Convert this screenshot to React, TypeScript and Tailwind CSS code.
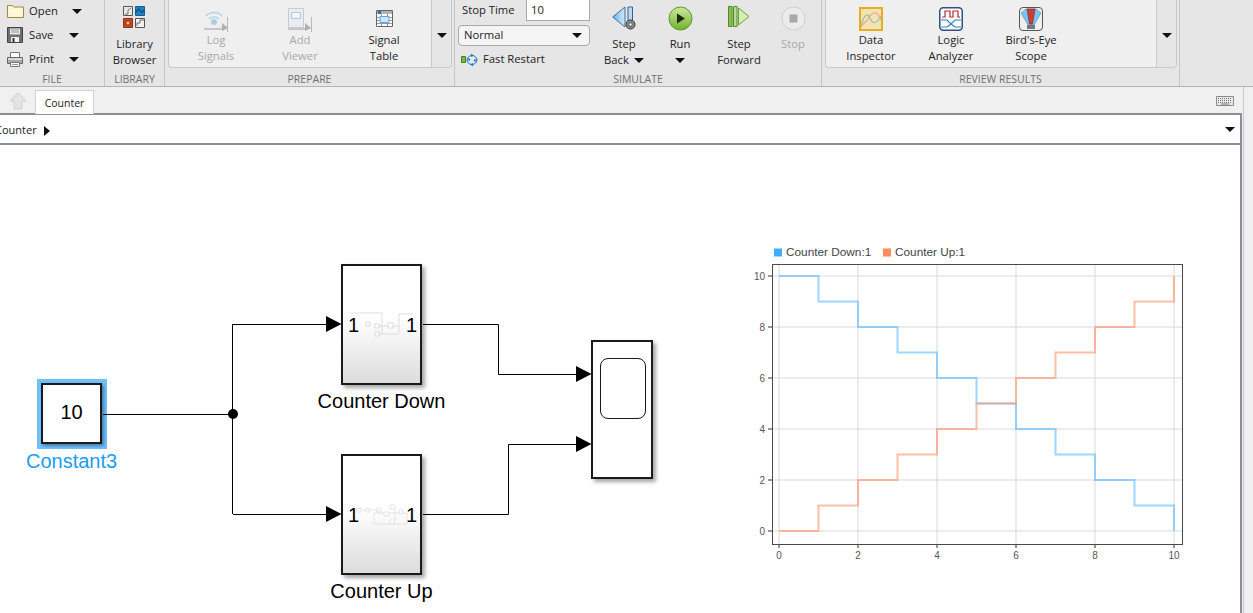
import React from "react";

const Caret = ({ className = "" }: { className?: string }) => (
  <svg width="10" height="5" viewBox="0 0 10 5" className={className}>
    <path d="M0 0H10L5 5Z" fill="#111" />
  </svg>
);

const FolderIcon = () => (
  <svg width="17" height="14" viewBox="0 0 17 14">
    <path d="M.5 1.5h5l1.5 1.500h9.500v10.500H.5Z" fill="#fdf3c4" stroke="#a08a4e" />
    <path d="M1.500 4.500h14v8h-14Z" fill="#fff8d8" />
  </svg>
);

const SaveIcon = () => (
  <svg width="16" height="16" viewBox="0 0 16 16">
    <path d="M.5.5h15v15H.5Z" fill="#6d6f73" stroke="#444" />
    <path d="M3 1.500h10v6H3Z" fill="#e6e6e6" />
    <path d="M4 3h8M4 5h8" stroke="#999" />
    <path d="M4 10h8v5H4Z" fill="#f2f2f2" />
    <path d="M5.500 11h2v4h-2Z" fill="#333" />
  </svg>
);

const PrintIcon = () => (
  <svg width="16" height="15" viewBox="0 0 16 15">
    <path d="M3.500.5h9v5h-9Z" fill="#fff" stroke="#777" />
    <path d="M.5 5.500h15v6H.5Z" fill="#a9adb3" stroke="#666" />
    <path d="M1 6h14v2H1Z" fill="#d4d7db" />
    <path d="M3.500 10.500h9v4h-9Z" fill="#fff" stroke="#777" />
    <path d="M5 12.500h6" stroke="#7aa3c7" />
  </svg>
);

const LibraryIcon = () => (
  <svg width="23" height="23" viewBox="0 0 23 23">
    <path d="M.5.5h9v9h-9Z" fill="#e9e9e9" stroke="#555" />
    <path d="M2 8 5 8 5 4 8 2" fill="none" stroke="#777" />
    <path d="M12.500.5h9v9h-9Z" fill="#1c82c4" stroke="#145f92" />
    <path d="M13.500 6c2-5 3-3 4-1s2 2 3-1" fill="none" stroke="#0b2a44" />
    <path d="M.5 12.500h9v9h-9Z" fill="#d9481c" stroke="#8f2f12" />
    <path d="M3 15h4v4H3Z" fill="#f8c090" stroke="#7a2408" />
    <path d="M12.500 12.500h9v9h-9Z" fill="#f1f1f1" stroke="#555" />
    <path d="M14 20v-3h3v-3h4" fill="none" stroke="#666" />
  </svg>
);

const LogSignalsIcon = () => (
  <svg width="25" height="24" viewBox="0 0 25 24" className="mt-[1px]">
    <path d="M2 8a11 11 0 0 1 16 0M5 11a7 7 0 0 1 10 0" fill="none" stroke="#b5d5ea" strokeWidth="1.500" />
    <circle cx="10" cy="14" r="3" fill="#a9cde6" />
    <path d="M0 21h19" stroke="#b8b8b8" strokeWidth="1.500" />
    <path d="M18 15l6 5-6 3Z" fill="#b0b0b0" />
    <path d="M23.500 9v15" stroke="#b8b8b8" />
  </svg>
);

const AddViewerIcon = () => (
  <svg width="24" height="24" viewBox="0 0 24 24" className="mt-[1px]">
    <path d="M.5.5h15v19H.5Z" fill="#e8eef3" stroke="#c6ccd2" />
    <path d="M3.500 4.500h9v6h-9Z" fill="#f3f6f8" stroke="#b9c6d2" />
    <path d="M0 21h19" stroke="#b8b8b8" strokeWidth="1.500" />
    <path d="M17 15l6 5-6 3Z" fill="#b0b0b0" />
    <path d="M23.500 9v15" stroke="#b8b8b8" />
  </svg>
);

const SignalTableIcon = () => (
  <svg width="17" height="17" viewBox="0 0 17 17" className="mt-[3px]">
    <path d="M.5.5h16v16H.5Z" fill="#fff" stroke="#666" />
    <path d="M1 1h15v3H1Z" fill="#aeb2b6" />
    <path d="M2 1h3v3H2Z" fill="#1c6fb8" />
    <path d="M1 7.500h15M1 10.500h15M1 13.500h15M5.500 4v12M11.500 4v12" stroke="#9a9a9a" />
    <path d="M4 6.500h9v6H4Z" fill="#cfe6fb" stroke="#5aa4e6" />
  </svg>
);

const FastRestartIcon = () => (
  <svg width="17" height="14" viewBox="0 0 17 14">
    <path d="M.5 3.500h4v6h-4Z" fill="#79b83d" stroke="#4e7f22" />
    <ellipse cx="11" cy="7" rx="5" ry="4.500" fill="#d9ecf8" stroke="#2a78b8" />
    <path d="M6 7h3l-1.500-2M16 7h-3l1.500 2" fill="none" stroke="#1c5f99" />
    <path d="M10 .5l3 2-3 1.500ZM12 13.500l-3-2 3-1.500Z" fill="#2a78b8" />
  </svg>
);

const StepBackIcon = () => (
  <svg width="24" height="24" viewBox="0 0 24 24">
    <defs>
      <linearGradient id="sb" x1="0" x2="1" y1="0" y2="0">
        <stop offset="0" stopColor="#6fb3e4" />
        <stop offset="1" stopColor="#d4e9f8" />
      </linearGradient>
    </defs>
    <path d="M.7 11 13 1v20Z" fill="url(#sb)" stroke="#3d6f99" />
    <path d="M16 1h4.500v15H16Z" fill="#b9daf2" stroke="#38648a" />
    <circle cx="18.500" cy="18.500" r="4.500" fill="#8d8d8d" stroke="#333" />
    <circle cx="18.500" cy="18.500" r="1.800" fill="#eee" stroke="#333" strokeWidth=".7" />
  </svg>
);

const RunIcon = () => (
  <svg width="25" height="25" viewBox="0 0 25 25">
    <defs>
      <linearGradient id="run" x1="0" x2="0" y1="0" y2="1">
        <stop offset="0" stopColor="#cfe89c" />
        <stop offset="1" stopColor="#6eb32e" />
      </linearGradient>
    </defs>
    <circle cx="12.500" cy="12.500" r="11.500" fill="url(#run)" stroke="#5d9a2b" />
    <path d="M9 7.500l8 5-8 5Z" fill="#1f2a12" />
  </svg>
);

const StepForwardIcon = () => (
  <svg width="22" height="22" viewBox="0 0 22 22">
    <path d="M.5.5h3.500v20H.5Z" fill="#8cc152" stroke="#4e8a25" />
    <path d="M5.500.5H9v20H5.500Z" fill="#b9dd8c" stroke="#4e8a25" />
    <path d="M10.500 2 21 10.500 10.500 19Z" fill="#d6ecb8" stroke="#6ba33a" />
  </svg>
);

const StopIcon = () => (
  <svg width="25" height="25" viewBox="0 0 25 25">
    <circle cx="12.500" cy="12.500" r="11.500" fill="#ececec" stroke="#cfcfcf" />
    <path d="M8.500 8.500h8v8h-8Z" fill="#a9a9a9" />
  </svg>
);

const DataInspectorIcon = () => (
  <svg width="24" height="24" viewBox="0 0 24 24">
    <path d="M1 1h22v22H1Z" fill="#f3e3b2" stroke="#e6ae1e" strokeWidth="2" />
    <path d="M2 18c4-12 7-12 9-7s5 8 11-2" fill="none" stroke="#9fbfae" strokeWidth="1.200" />
    <path d="M2 20c3-6 5-4 7-8s5-7 8-6 4 5 5 7" fill="none" stroke="#e2a68d" strokeWidth="1.200" />
  </svg>
);

const LogicAnalyzerIcon = () => (
  <svg width="24" height="24" viewBox="0 0 24 24">
    <rect x=".75" y=".75" width="22.500" height="22.500" rx="3.500" fill="#fff" stroke="#2f4f86" strokeWidth="1.500" />
    <path d="M3 10h3V4h5v6h3V4h5v6h2" fill="none" stroke="#b5292d" strokeWidth="1.200" />
    <path d="M2 13h6l4 4 4-4h6M2 20h6l4-3 4 3h6" fill="none" stroke="#2e7fc0" strokeWidth="1.200" />
  </svg>
);

const BirdsEyeIcon = () => (
  <svg width="24" height="24" viewBox="0 0 24 24">
    <rect x=".5" y=".5" width="23" height="23" rx="3.500" fill="#efefef" stroke="#555" />
    <path d="M2 6 7 2h10l5 4-7 12H9Z" fill="#7cc3ee" stroke="#3f8fc6" strokeWidth=".6" />
    <path d="M8 2h8l-2.500 15h-3Z" fill="#c8403a" stroke="#8b1e1a" strokeWidth=".6" />
    <path d="M8 18h8v4H8Z" fill="#777" />
  </svg>
);

interface RibbonButtonProps {
  lines: React.ReactNode[];
  icon: React.ReactNode;
  className: string;
  tall?: boolean;
  disabled?: boolean;
}

const RibbonButton = ({ lines, icon, className, tall, disabled }: RibbonButtonProps) => (
  <div className={`flex flex-col items-center shrink-0 leading-[16px] ${className} ${disabled ? "text-[#a9a9a9]" : "text-[#222]"}`}>
    <div className={`flex justify-center items-start w-full ${tall ? "h-[36px] pt-[6px]" : "h-[32px] pt-[7px]"}`}>{icon}</div>
    {lines.map((line, i) => (
      <div key={i} className="flex items-center gap-[5px] h-[16px] whitespace-nowrap">{line}</div>
    ))}
  </div>
);

const Section = ({ label, className, children }: { label: string; className: string; children: React.ReactNode }) => (
  <div className={`flex flex-col shrink-0 h-full border-r border-[#c6c6c6] ${className}`}>
    <div className="flex h-[71px] shrink-0">{children}</div>
    <div className="flex-1 text-center text-[10.5px] leading-[16px] text-[#6f6f6f]">{label}</div>
  </div>
);

const FileRow = ({ icon, label, labelClass }: { icon: React.ReactNode; label: string; labelClass: string }) => (
  <div className="flex items-center h-[24px] pl-[7px] text-[#222]">
    <div className="w-[22px] shrink-0">{icon}</div>
    <span className={labelClass}>{label}</span>
    <Caret />
  </div>
);

const Ribbon = () => (
  <div className="flex h-[87px] shrink-0 bg-[#e6e6e6] border-b border-[#b4b4b4] text-[11.25px]">
    <Section label="FILE" className="w-[105px]">
      <div className="flex flex-col -mt-[1px]">
        <FileRow icon={<FolderIcon />} label="Open" labelClass="w-[43px]" />
        <FileRow icon={<SaveIcon />} label="Save" labelClass="w-[40px]" />
        <FileRow icon={<PrintIcon />} label="Print" labelClass="w-[40px]" />
      </div>
    </Section>
    <Section label="LIBRARY" className="w-[60px]">
      <RibbonButton className="w-[59px]" tall icon={<LibraryIcon />} lines={["Library", "Browser"]} />
    </Section>
    <Section label="PREPARE" className="w-[290px]">
      <div className="flex ml-[3px] w-[284px] h-[68px] bg-[#efefef] border border-t-0 border-[#c9c9c9] rounded-b-[4px] pl-[5px]">
        <RibbonButton className="w-[84px]" disabled icon={<LogSignalsIcon />} lines={["Log", "Signals"]} />
        <RibbonButton className="w-[84px]" disabled icon={<AddViewerIcon />} lines={["Add", "Viewer"]} />
        <RibbonButton className="w-[84px]" icon={<SignalTableIcon />} lines={["Signal", "Table"]} />
        <div className="ml-auto w-[20px] border-l border-[#c9c9c9] bg-[#e6e6e6] rounded-br-[4px] flex justify-center pt-[33px]">
          <Caret />
        </div>
      </div>
    </Section>
    <Section label="SIMULATE" className="w-[367px]">
      <div className="flex flex-col w-[142px] shrink-0 pl-[3px] text-[#222]">
        <div className="flex items-center h-[21px] pl-[4px]">
          <span className="w-[64px]">Stop Time</span>
          <div className="w-[64px] h-[21px] bg-white border border-t-0 border-[#a9a9a9] pl-[4px] leading-[19px]">10</div>
        </div>
        <div className="flex items-center justify-between w-[132px] h-[21px] mt-[4px] px-[5px] bg-[#f5f5f5] border border-[#a9a9a9] rounded-[4px]">
          <span>Normal</span>
          <Caret className="mr-[2px]" />
        </div>
        <div className="flex items-center h-[19px] mt-[4px] pl-[3px]">
          <div className="w-[22px]"><FastRestartIcon /></div>
          <span>Fast Restart</span>
        </div>
      </div>
      <RibbonButton className="w-[56px] -ml-[1px]" tall icon={<StepBackIcon />} lines={["Step", <>Back <Caret /></>]} />
      <RibbonButton className="w-[56px]" tall icon={<RunIcon />} lines={["Run", <Caret />]} />
      <RibbonButton className="w-[62px]" tall icon={<StepForwardIcon />} lines={["Step", "Forward"]} />
      <RibbonButton className="w-[46px]" tall disabled icon={<StopIcon />} lines={["Stop"]} />
    </Section>
    <Section label="REVIEW RESULTS" className="w-[358px]">
      <div className="flex ml-[3px] w-[352px] h-[68px] bg-[#efefef] border border-t-0 border-[#c9c9c9] rounded-b-[4px] pl-[5px]">
        <RibbonButton className="w-[80px]" icon={<DataInspectorIcon />} lines={["Data", "Inspector"]} />
        <RibbonButton className="w-[80px]" icon={<LogicAnalyzerIcon />} lines={["Logic", "Analyzer"]} />
        <RibbonButton className="w-[80px]" icon={<BirdsEyeIcon />} lines={["Bird's-Eye", "Scope"]} />
        <div className="ml-auto w-[20px] border-l border-[#c9c9c9] bg-[#e6e6e6] rounded-br-[4px] flex justify-center pt-[33px]">
          <Caret />
        </div>
      </div>
    </Section>
  </div>
);

const TabBar = () => (
  <div className="flex items-end h-[26px] shrink-0 bg-[#f0f0f0] text-[10.5px] text-[#222]">
    <svg width="18" height="18" viewBox="0 0 18 18" className="ml-[9px] mb-[3px]">
      <path d="M9 .8 17 9h-4v8H5V9H1Z" fill="#e4e4e4" stroke="#cfcfcf" />
    </svg>
    <div className="relative z-10 -mb-[1px] ml-[8px] w-[59px] h-[24px] bg-white border border-b-0 border-[#d2d2d2] text-center leading-[25px]">Counter</div>
    <svg width="18" height="10" viewBox="0 0 18 10" className="ml-auto mr-[9px] mb-[7px]">
      <path d="M.5.5h17v9H.5Z" fill="#e9e9e9" stroke="#8b8b8b" />
      <path d="M2 2.500h14M2 4.500h14M2 6.500h14" stroke="#777" strokeDasharray="1 1" />
      <path d="M5 8h8" stroke="#777" />
    </svg>
  </div>
);

const Breadcrumb = () => (
  <div className="flex items-center h-[32px] shrink-0 overflow-hidden bg-white border-t-2 border-b-2 border-[#8b8f98] text-[11px] text-[#222]">
    <span className="-ml-[5px] mt-[3px]">Counter</span>
    <svg width="6" height="10" viewBox="0 0 6 10" className="ml-[7px] mt-[3px]">
      <path d="M0 0 6 5 0 10Z" fill="#111" />
    </svg>
    <Caret className="ml-auto mr-[5px]" />
  </div>
);

const Port = ({ className }: { className: string }) => (
  <span className={`absolute top-[45px] text-[20px] leading-[28px] text-black ${className}`}>1</span>
);

const SubsystemBlock = ({ className, label, down }: { className: string; label: string; down?: boolean }) => (
  <div className={`absolute w-[81px] h-[121px] ${className}`}>
    <div className="relative w-full h-full border-2 border-[#1a1a1a] bg-gradient-to-b from-white from-45% to-[#dcdcdc] shadow-[3px_3px_4px_rgba(0,0,0,0.35)]">
      <Port className="left-[5px]" />
      <Port className="right-[3px]" />
      <svg width="81" height="121" viewBox="0 0 81 121" className="absolute -left-[2px] -top-[2px]">
        {down ? (
          <g fill="#fff" stroke="#d0d0d0" strokeWidth=".7">
            <path d="M9 49H41V70M58 50V69M58 50H72M38 62H58M38 70H58" fill="none" />
            <path d="M25 58h4v4h-4ZM34 60h4v4h-4ZM47 59h5v5h-5ZM34 68h4v4h-4Z" />
          </g>
        ) : (
          <g fill="#fff" stroke="#dadada" strokeWidth=".7">
            <path d="M33 59H66V70H33ZM20 56H36M54 55V66" fill="none" />
            <path d="M16 54h4v4h-4ZM25 54h3v4h-3ZM36 54h4v4h-4ZM43 58h5v4h-5ZM49 51h5v4h-5ZM58 56h4v4h-4ZM49 66h4v4h-4Z" />
          </g>
        )}
      </svg>
    </div>
    <div className="absolute left-1/2 -translate-x-1/2 top-[123px] whitespace-nowrap text-[20px] leading-[28px] text-black">{label}</div>
  </div>
);

const Wires = () => (
  <svg width="1241" height="468" viewBox="0 145 1241 468" className="absolute left-0 top-0">
    <g fill="none" stroke="#000" strokeWidth="1">
      <path d="M103 414.500H233M232.500 324V514M233 324.500H328M233 514.500H328" />
      <path d="M423 324.500H498.500V374.500H578M423 514.500H508.500V444.500H578" />
    </g>
    <circle cx="233" cy="414" r="5" fill="#000" />
    <path d="M326 316 341.500 324 326 332ZM326 506 341.500 514 326 522ZM576 366 591.500 374 576 382ZM576 436 591.500 444 576 452Z" fill="#000" />
  </svg>
);

const X0 = 779;
const XS = 39.5;
const Y0 = 531;
const YS = 25.5;
const px = (x: number) => X0 + x * XS;
const py = (y: number) => Y0 - y * YS;

// staircase over 0..10, value at each step comes from fn
const stepPath = (fn: (i: number) => number) => {
  let d = `M${px(0)} ${py(fn(0))}`;
  for (let i = 0; i < 10; i++) {
    d += `H${px(i + 1)}`;
    d += `V${py(fn(i + 1))}`;
  }
  return d;
};

const Chart = () => {
  const ticks = [0, 2, 4, 6, 8, 10];
  return (
    <svg width="1241" height="468" viewBox="0 145 1241 468" className="absolute left-0 top-0" fontFamily="'Liberation Sans', Arial, sans-serif">
      <rect x="774" y="248.500" width="8" height="8" fill="#3daeff" />
      <text x="786" y="256" fontSize="11.800" fill="#444">Counter Down:1</text>
      <rect x="883" y="248.500" width="8" height="8" fill="#ff8a5c" />
      <text x="895" y="256" fontSize="11.800" fill="#444">Counter Up:1</text>
      {ticks.map((t) => (
        <g key={t}>
          <path d={`M${px(t)} 265V548`} stroke="#d9d9d9" />
          <path d={`M768 ${py(t)}H1182`} stroke="#d9d9d9" />
          <path d={`M${px(t)} 544V548M768 ${py(t)}H772`} stroke="#444" />
          <text x={px(t)} y="558.500" fontSize="10" textAnchor="middle" fill="#555">{t}</text>
          <text x="765" y={py(t) + 3.500} fontSize="10" textAnchor="end" fill="#555">{t}</text>
        </g>
      ))}
      <rect x="772.500" y="264.500" width="410" height="280" fill="none" stroke="#4a4a4a" />
      <path d={stepPath((i) => 10 - i)} fill="none" stroke="#3daeff" strokeOpacity=".5" strokeWidth="2" />
      <path d={stepPath((i) => i)} fill="none" stroke="#ff8a5c" strokeOpacity=".55" strokeWidth="2" />
    </svg>
  );
};

const Canvas = () => (
  <div className="relative flex-1 bg-white overflow-hidden font-['Liberation_Sans',Arial,sans-serif]">
    <Chart />
    {/* free canvas: blocks sit at their diagram coordinates */}
    <div className="absolute left-[37px] top-[234px] w-[70px] h-[70px] bg-[#6fc0ff] flex items-center justify-center">
      <div className="w-[61px] h-[61px] -mt-[1px] -ml-[1px] pb-[3px] border-2 border-[#1a1a1a] bg-white shadow-[2px_2px_3px_rgba(0,0,0,0.35)] flex items-center justify-center text-[20px] text-black">10</div>
    </div>
    <div className="absolute left-[26px] top-[302px] text-[20px] leading-[28px] text-[#1a9bf5]">Constant3</div>
    <SubsystemBlock className="left-[341px] top-[119px]" label="Counter Down" down />
    <SubsystemBlock className="left-[341px] top-[309px]" label="Counter Up" />
    <div className="absolute left-[591px] top-[195px] w-[62px] h-[139px] border-2 border-[#1a1a1a] bg-white shadow-[3px_3px_4px_rgba(0,0,0,0.35)]">
      <div className="ml-[7px] mt-[16px] w-[46px] h-[61px] border border-[#1a1a1a] rounded-[8px]" />
    </div>
    <Wires />
  </div>
);

const App = () => (
  <div className="flex flex-col w-[1253px] h-[613px] overflow-hidden bg-[#f0f0f0] font-['Open_Sans','Noto_Sans',sans-serif]">
    <Ribbon />
    <div className="flex flex-1 min-h-0">
      <div className="flex flex-col w-[1244px] shrink-0 border-r border-[#c9c9c9]">
        <TabBar />
        <div className="flex flex-col flex-1 min-h-0 w-[1242px] border-r-2 border-[#8b8f98]">
          <Breadcrumb />
          <Canvas />
        </div>
      </div>
    </div>
  </div>
);

export default App;
